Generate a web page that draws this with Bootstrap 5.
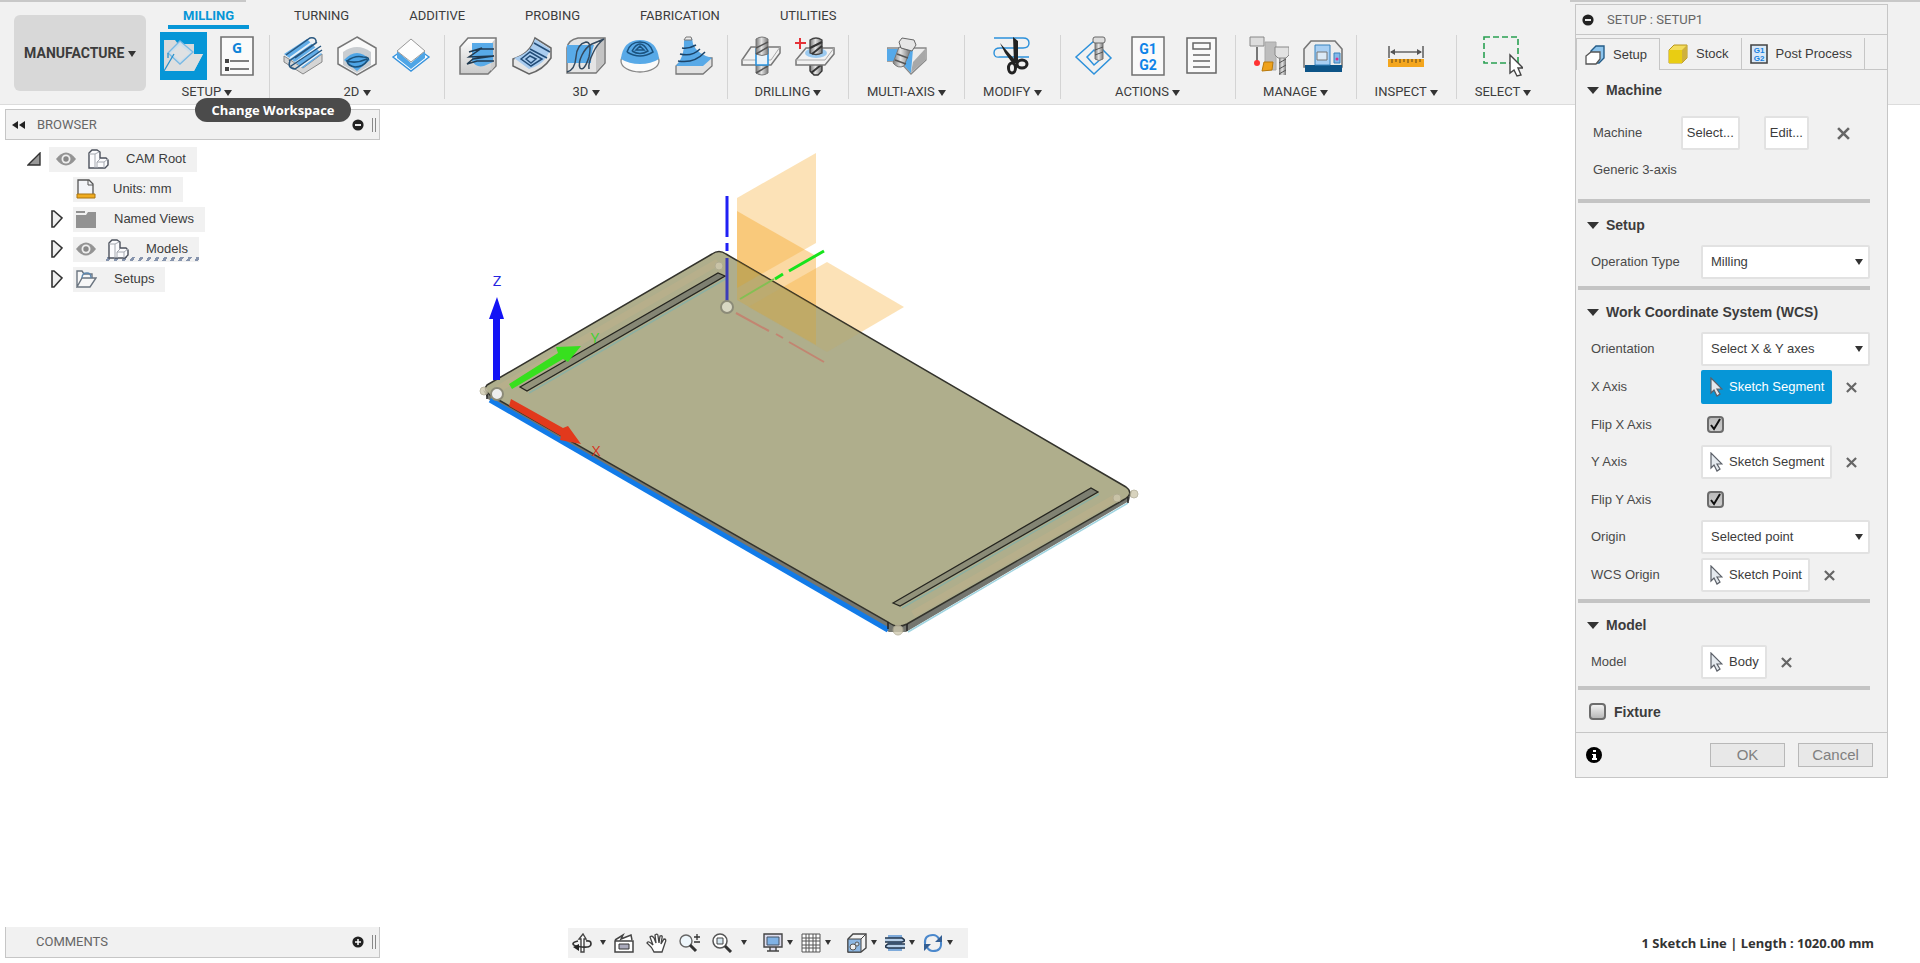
<!DOCTYPE html>
<html lang="en">
<head>
<meta charset="utf-8">
<meta name="viewport" content="width=device-width, initial-scale=1">
<title>Manufacture workspace</title>
<link href="https://cdn.jsdelivr.net/npm/bootstrap@5.3.0/dist/css/bootstrap.min.css" rel="stylesheet">
<style>
:root{--chrome:#f1f1f1;--edge:#c6c6c6;--ink:#3c3c3c;--accent:#0696d7}
body{font:13px/16px "Liberation Sans",Arial,sans-serif;color:var(--ink);background:#fff}
button,select,input{font:inherit;color:inherit}
svg{display:block;flex:none}
.ui-face{font-family:Roboto,"Liberation Sans",sans-serif}
.plain-btn{background:none;border:0;padding:0}
.tri{display:inline-block;width:0;height:0;border:3px solid transparent;border-top:5px solid #333;border-bottom:0;vertical-align:middle}
/* ribbon */
.ribbon{background:var(--chrome);height:105px;border-bottom:1px solid #dcdcdc}
.edge-line{height:2px;background:#c8c8c8;position:absolute;top:0}
.edge-left{left:0;width:246px}.edge-right{right:0;width:350px}
.workspace-btn{width:132px;height:76px;margin:15px 4px 0 14px;background:#d8d8d8;border:0;border-radius:6px;font-weight:700;font-size:14px}
.ribbon-tabs{height:29px;padding-left:18px;gap:30px}
.ribbon-tabs a{height:29px;padding:8px 15px 0;color:var(--ink);text-decoration:none;border-bottom:4px solid transparent}
.ribbon-tabs a.active{color:var(--accent);border-color:var(--accent);font-weight:700}
.tool-group{height:64px;margin-top:6px;border-left:1px solid #d4d4d4;padding:0 13px}
.tool-group:first-child{border:0;padding:0 15px 0 10px}
.tool-icons{height:42px;gap:14px}
.tool-group:first-child .tool-icons{gap:13px}
.tool-label{padding:0 5px;margin-top:7px}
.tool-label .tri,.workspace-btn .tri{border-width:6px 4px 0}
.tool-on{background:var(--accent)}
.hint{left:195px;top:98px;height:24px;width:156px;border-radius:12px;background:#4b4b4b;color:#fff;font:bold 13px/24px "Open Sans","Noto Sans",sans-serif;z-index:5}
/* docks */
.dock-side{padding-left:5px}
.dock{width:375px;height:31px;background:var(--chrome);border:1px solid var(--edge);color:#666;padding:0 3px 0 6px}
.grip{width:4px;height:14px;border:1px solid #888;border-width:0 1px}
.tree{padding:4px 0 0 18px}
.tree li{height:30px}
.tree .node{height:25px;background:var(--chrome);padding:0 11px 0 3px}
.twist{width:22px}
.branch{padding-left:24px}
.node .node-text{padding-left:17px}
.tree .hatch{background:repeating-linear-gradient(120deg,transparent 0 4px,#8694ad 4px 7px) left 30px bottom 1px/100% 4px no-repeat var(--chrome)}
/* setup panel */
.setup-panel{top:4px;right:32px;width:313px;background:var(--chrome);border:1px solid var(--edge);z-index:4}
.panel-title{height:30px;border-bottom:1px solid var(--edge);color:#666;padding-left:6px;gap:13px}
.panel-tabs{padding-top:3px}
.panel-tabs button{height:32px;border:1px solid var(--edge);border-width:0 1px 1px 0;background:none;gap:8px;padding:0 12px 0 8px}
.panel-tabs button.active{border-width:1px 1px 0 1px}
.tabs-rest{border-bottom:1px solid var(--edge)}
.sect{margin:0 17px 0 2px;border-bottom:4px solid #c4c4c4;padding:4px 0 5px 13px}
.sect-head{height:36px;font-weight:700;font-size:14px;gap:7px}
.sect-head .tri{border-width:7px 6px 0;border-top-color:#333;margin-left:-4px}
.line{height:38px}
.line-low{height:37px}
.lbl{width:110px;color:#4a4a4a}
.box{height:34px;background:#fff;border:2px solid #e2e2e2;border-radius:2px;padding:0 6px 0 7px;gap:6px}
.box.hot{background:var(--accent);border-color:var(--accent);color:#fff}
select.box{flex:1;appearance:none;padding:0 8px;background:#fff url("data:image/svg+xml,%3Csvg xmlns='http://www.w3.org/2000/svg' width='8' height='6'%3E%3Cpath fill='%23333' d='M0 0h8L4 6z'/%3E%3C/svg%3E") no-repeat right 5px center}
.x-btn{margin-left:14px}
.tick{appearance:none;width:17px;height:17px;margin:0 0 0 6px;border:2px solid #6c6c6c;border-radius:4px;background:linear-gradient(#f2f2f2,#b9b9b9)}
.tick:checked{background:url("data:image/svg+xml,%3Csvg xmlns='http://www.w3.org/2000/svg' viewBox='0 0 13 13'%3E%3Cpath fill='none' stroke='%23111' stroke-width='2' d='M2 7l3 4L11 1'/%3E%3C/svg%3E") center/13px no-repeat,linear-gradient(#bbb,#ccc)}
.fixture{padding:3px 0 2px 7px}
.fixture label{font-size:14px}
.machine-body{margin:0 17px 0 2px;border-bottom:4px solid #c4c4c4;padding:2px 0 13px 15px}
.machine-body .sect-head{margin-left:-2px}
.machine-line{margin:6px 0 2px}
.foot{border-top:1px solid var(--edge);height:45px;padding:0 14px 0 10px;gap:13px}
.foot button.act{width:75px;height:24px;border:1px solid #b8b8b8;background:#e8e8e8;color:#808080;font-size:15px;padding:0;line-height:20px}
/* bottom */
.bottom-bar{padding-bottom:5px}
.nav-tools{height:30px;background:var(--chrome);margin-left:188px;padding:0 15px 0 4px}
.nav-tools button+button{margin-left:12px}
.status{font:bold 13px/16px "Noto Sans","Open Sans",sans-serif;padding-right:46px;color:#333}
.scene{z-index:-1}
</style>
</head>
<body class="min-vh-100 d-flex flex-column position-relative">
<svg width="0" height="0" class="position-absolute" aria-hidden="true"><defs>
<linearGradient id="met" x1="0" x2="1"><stop offset="0" stop-color="#777"/><stop offset=".45" stop-color="#e4e4e4"/><stop offset="1" stop-color="#777"/></linearGradient>
<linearGradient id="blk" x1="0" x2="0" y1="0" y2="1"><stop offset="0" stop-color="#fff"/><stop offset="1" stop-color="#c9c9c9"/></linearGradient>
<symbol id="eye" viewBox="0 0 20 14"><path d="M0 7Q10-6 20 7Q10 20 0 7" fill="#949494"/><circle cx="10" cy="7" r="4.5" fill="#eee"/><circle cx="10" cy="7" r="2.7" fill="#888"/></symbol>
<symbol id="comp" viewBox="0 0 21 20"><path d="M1 4l3-3h5l3 2v6h6l2 2v5l-3 3H1z" fill="#fbfbfd" stroke="#4c515c" stroke-width="1.4"/><path d="M1 5h6v14M7 5l4-2M9 13h7v6M16 13l4-3M9 19v-6l3-3" fill="none" stroke="#a5a9b1"/></symbol>
<symbol id="minus" viewBox="0 0 12 12"><circle cx="6" cy="6" r="5.6" fill="#222"/><path d="M3 6h6" stroke="#fff" stroke-width="1.8"/></symbol>
<symbol id="plus" viewBox="0 0 12 12"><circle cx="6" cy="6" r="5.6" fill="#222"/><path d="M3 6h6M6 3v6" stroke="#fff" stroke-width="1.5"/></symbol>
<symbol id="ptr" viewBox="0 0 13 20"><path d="M1 1v15l3-3 3 6 3-2-3-5h5z" fill="#e4e9ee" stroke="#5b6068" stroke-width="1.2"/></symbol>
<symbol id="cross" viewBox="0 0 12 12"><path d="M1 1l10 10M11 1L1 11" stroke="#666" stroke-width="2.4"/></symbol>
<symbol id="twisty" viewBox="0 0 12 18"><path d="M1 1h2l8 7-8 9H1z" fill="#f0f0f0" stroke="#333" stroke-width="1.6"/></symbol>
</defs></svg>

<svg class="scene position-absolute start-0 bottom-0 w-100" viewBox="0 104 1920 859" role="img" aria-label="Stock plate with coordinate axes">
<defs><clipPath id="face"><path d="M487 385L712 254Q719 249 726 254L1126 487Q1134 493 1125 499L907 624Q897 629 888 622L490 395Q483 390 487 385Z"/></clipPath>
<linearGradient id="slot"><stop offset="0" stop-color="#95957c"/><stop offset="1" stop-color="#7b7d70"/></linearGradient></defs>
<g fill="#f7ab32" fill-opacity=".35"><path d="M737 198L816 153V243L737 288Z"/><path d="M737 211L816 256V345L737 300Z" fill-opacity=".45"/><path d="M827 262L904 307L827 352L748 307Z"/></g>
<path d="M483 390L488 399L889 632H906L1129 501L1132 491L907 620H888Z" fill="#74766f"/>
<path d="M908 632L1128 503" stroke="#9fd4e0" stroke-width="1.5"/>
<path d="M490 400L888 630" stroke="#127be8" stroke-width="5"/>
<path d="M487 385L712 254Q719 249 726 254L1126 487Q1134 493 1125 499L907 624Q897 629 888 622L490 395Q483 390 487 385Z" fill="#afae8c" stroke="#33332c" stroke-width="1.5"/>
<path d="M498 389L718 262M913 614L1115 498" stroke="#c5b28a" stroke-width="7" opacity=".4"/>
<g clip-path="url(#face)" fill="#f0a000" fill-opacity=".2"><path d="M737 198L816 153V243L737 288Z"/><path d="M737 211L816 256V345L737 300Z"/><path d="M827 262L904 307L827 352L748 307Z" fill-opacity=".08"/></g>
<g stroke="#25251f" stroke-width="1.3" fill="url(#slot)"><path d="M520 387L718 273L725 276L527 391Z"/><path d="M893 603L1091 488L1098 492L900 606Z"/></g>
<path d="M529 393L727 278M902 608L1099 494" stroke="#7fb1ac" stroke-width="1.5" opacity=".7"/>
<path d="M888 622v7M907 624v7M1128 497v6M487 394v5" stroke="#222" stroke-width="1.5"/>
<g stroke-width="3" fill="none"><path d="M727 196v41M727 243v8" stroke="#2020f5"/><path d="M727 258v44" stroke="#3c3cb8"/><path d="M740 299l34-20" stroke="#84bf53" stroke-width="2"/><path d="M775 279l8-5M789 271l35-20" stroke="#18e31c"/><path d="M736 313l33 18M776 334l7 4M789 342l35 20" stroke="#c28571" stroke-width="2"/></g>
<g fill="#d9d8c4" stroke="#8c8b78" stroke-width="2"><circle cx="727" cy="307" r="6"/><circle cx="497" cy="394" r="6" fill="#eee"/></g>
<g fill="#cfc9ae" stroke="#b0ab92" opacity=".8"><circle cx="719" cy="266" r="4"/><circle cx="1117" cy="498" r="4"/><circle cx="484" cy="391" r="4"/><circle cx="1134" cy="494" r="4"/><circle cx="898" cy="630" r="5"/></g>
<path d="M493 380V319h-4l8-22 7 22h-4v61z" fill="#1313f5"/>
<path d="M509 384L558 353L556 347L581 346L568 362L563 359L512 389Z" fill="#37e01e"/>
<path d="M511 399L563 428L568 426L581 444L560 440L561 436L509 406Z" fill="#e2391c"/>
<g font-family="Open Sans,Noto Sans,sans-serif" font-size="15" text-anchor="middle"><text x="497" y="286" fill="#2424e0">Z</text><text x="595" y="343" fill="#3cd22d">Y</text><text x="596" y="456" fill="#d8301c">X</text></g>
</svg>

<header class="ribbon ui-face d-flex align-items-start position-relative">
<div class="edge-line edge-left"></div><div class="edge-line edge-right"></div>
<button class="workspace-btn px-0">MANUFACTURE <span class="tri"></span></button>
<div>
<nav class="ribbon-tabs d-flex" aria-label="Workspaces"><a href="#" class="active">MILLING</a><a href="#">TURNING</a><a href="#">ADDITIVE</a><a href="#">PROBING</a><a href="#">FABRICATION</a><a href="#">UTILITIES</a></nav>
<div class="d-flex">
<section class="tool-group"><div class="tool-icons d-flex align-items-center justify-content-center">
<button class="plain-btn tool-on" aria-label="New setup"><svg width="47" height="48" viewBox="0 0 47 48"><path d="M4 39V8h11l3 4h16v10h9l-9 17z" fill="#d9dadb"/><path d="M4 39L15 22h28L34 39z" fill="#dedfdf"/><path d="M20 9l13 11-13 12L8 21z" fill="#cddeea" stroke="#79b9e4" stroke-width="1.3"/><path d="M20 13l10 8-10 8-9-8z" fill="#dfe1e3"/><path d="M4 39L14 22M8 21v5" fill="none" stroke="#2891cd" stroke-width="1.3"/></svg></button>
<button class="plain-btn" aria-label="NC program"><svg width="34" height="40" viewBox="0 0 34 40"><path d="M1 1h32v38H1z" fill="#fafafa" stroke="#707070" stroke-width="1.6"/><text x="17" y="17" text-anchor="middle" font-family="Open Sans" font-weight="700" font-size="14" fill="#0d83d8">G</text><path d="M5 23h4v4H5zM5 31h4v4H5z" fill="#444"/><path d="M10 25h19M10 33h19" stroke="#555" stroke-width="1.4"/></svg></button>
</div><div class="tool-label text-center">SETUP <span class="tri"></span></div></section>

<section class="tool-group"><div class="tool-icons d-flex align-items-center justify-content-center">
<button class="plain-btn" aria-label="Face"><svg width="40" height="40"><path d="M1 20L20 32 39 18v8L20 38 1 26z" fill="#d5d5d5" stroke="#888"/><path d="M1 18L24 3l15 15-19 14z" fill="#63aee8"/><path d="M7 22L31 5M12 27L36 10M17 31L38 16" stroke="#e8f1f8" stroke-width="2"/><path d="M3 19L27 2q7-1 6 5L12 22M6 25L34 6M8 30L38 10M7 25q-3 7 5 8L39 14" fill="none" stroke="#27567f" stroke-width="1.5"/></svg></button>
<button class="plain-btn" aria-label="2D adaptive"><svg width="40" height="40"><path d="M20 1l19 11v16L20 39 1 28V12z" fill="#fafafa" stroke="#767676" stroke-width="1.5"/><path d="M6 16q14-10 28 0v13L20 37 6 29z" fill="#c9cdd1"/><path d="M7 24q13-14 26 0L20 35z" fill="#4ea5e6"/><path d="M10 25q8-6 16-4 8 0 4 4-4 6-12 6-7-1-8-6q9 3 20-2" fill="none" stroke="#1c527b" stroke-width="1.5"/></svg></button>
<button class="plain-btn" aria-label="2D pocket"><svg width="40" height="40"><path d="M20 8l18 13-18 14L2 21z" fill="#fff" stroke="#3793dd" stroke-width="1.4"/><path d="M6 15v7l14 11 14-11v-7L20 27z" fill="#4ea5e6"/><path d="M20 3l14 12-14 11L6 15z" fill="#fdfdfd" stroke="#999"/></svg></button>
</div><div class="tool-label text-center">2D <span class="tri"></span></div></section>

<section class="tool-group"><div class="tool-icons d-flex align-items-center justify-content-center">
<button class="plain-btn" aria-label="Adaptive clearing"><svg width="40" height="40"><path d="M2 11L10 2h28v28l-8 8H2z" fill="url(#blk)" stroke="#777" stroke-width="1.5"/><path d="M37 3l-4 5v27l4-5z" fill="#ccc"/><path d="M14 7h21v19l-9 4q-8 2-12-5z" fill="#58aae8"/><path d="M36 13H21l-10 3 13-4-13 9 25-1-21 3-6 5 10-3h17" fill="none" stroke="#20394f" stroke-width="1.5"/></svg></button>
<button class="plain-btn" aria-label="Pocket clearing"><svg width="40" height="40"><path d="M1 23Q18 18 23 2l16 10v10Q31 34 17 38L1 30z" fill="#e6e6e6" stroke="#666" stroke-width="1.5"/><path d="M2 22Q18 18 23 3l15 10Q34 28 17 33z" fill="#a9ccef"/><path d="M22 7l16 9M18 13l17 9M9 23l9-7 12 7-11 7zM14 23l4-3 6 3-5 4z" fill="none" stroke="#234d78" stroke-width="1.5"/></svg></button>
<button class="plain-btn" aria-label="Parallel"><svg width="40" height="40"><path d="M1 12Q2 4 12 2h27v25l-9 10H1z" fill="#e4e4e4" stroke="#777" stroke-width="1.5"/><path d="M1 9h27q-3 8-3 18H1z" fill="#58aae8"/><path d="M30 10l8-7v24l-8 9z" fill="#c4c4c4"/><path d="M1 36q8-2 9-15T20 6q6 0 3 15-5 15-9 11-2-5 2-13T26 8l12-5M23 33q-1-6 4-16 4-9 11-14" fill="none" stroke="#34495e" stroke-width="1.5"/></svg></button>
<button class="plain-btn" aria-label="Scallop"><svg width="40" height="40"><ellipse cx="20" cy="25" rx="19" ry="11" fill="#fafafa" stroke="#888" stroke-width="1.3"/><path d="M1 23Q3 4 20 4t19 19q-8 5-19 5T1 23" fill="#58a9e7"/><path d="M7 16Q10 6 20 6t13 10q-13 8-26 0M12 15Q16 8 20 8t8 7q-8 5-16 0M16 14l4-4 4 4z" fill="none" stroke="#1b5380" stroke-width="1.5"/></svg></button>
<button class="plain-btn" aria-label="Contour"><svg width="40" height="40"><path d="M2 30l9-8h27v8l-9 8H2z" fill="#e1e1e1" stroke="#777" stroke-width="1.3"/><path d="M2 30q9-10 8-25l2-3h6l1 6q4 10 19 14l-9 8z" fill="#58a9e7"/><path d="M10 4l2-3h5l1 3z" fill="#ededed" stroke="#777"/><path d="M8 12q7 1 14-3M6 18q12 3 20-5M4 25q16 3 27-9" fill="none" stroke="#1b4469" stroke-width="1.5"/></svg></button>
</div><div class="tool-label text-center">3D <span class="tri"></span></div></section>

<section class="tool-group"><div class="tool-icons d-flex align-items-center justify-content-center">
<button class="plain-btn" aria-label="Drill"><svg width="40" height="40"><path d="M15 28h12v9q-6 4-12 0z" fill="url(#met)" stroke="#777"/><path d="M15 37l12-7" stroke="#555" stroke-width="1.5"/><path d="M1 24L10 11h29v6l-9 12H1z" fill="#f2f2f2" stroke="#777" stroke-width="1.5"/><path d="M1 24h29l9-13" fill="none" stroke="#aaa"/><path d="M15 13h12v16H15z" fill="#e9f2f9" stroke="#2b92dc" stroke-width="1.6"/><path d="M15 3q6-4 12 0v15q-6 3-12 0z" fill="url(#met)" stroke="#777"/><path d="M15 12l12-6M15 18l12-7" stroke="#555" stroke-width="1.5"/></svg></button>
<button class="plain-btn" aria-label="Hole recognition"><svg width="40" height="40"><path d="M15 28h12v7l-4 4h-4l-4-4z" fill="url(#met)" stroke="#333" stroke-width="1.3"/><path d="M16 37l10-8" stroke="#333" stroke-width="2"/><path d="M1 24L11 12h28v6l-9 11H1z" fill="#f2f2f2" stroke="#777" stroke-width="1.5"/><path d="M1 24h29l9-12" fill="none" stroke="#aaa"/><ellipse cx="21" cy="17" rx="11" ry="5" fill="#9bcaf0"/><path d="M15 4q6-4 12 0v13q-6 3-12 0z" fill="url(#met)" stroke="#444" stroke-width="1.3"/><path d="M15 12l12-6M17 18l10-8" stroke="#333" stroke-width="2"/><path d="M0 7h11M5 2v11" stroke="#e53238" stroke-width="2"/></svg></button>
</div><div class="tool-label text-center">DRILLING <span class="tri"></span></div></section>

<section class="tool-group"><div class="tool-icons d-flex align-items-center justify-content-center">
<button class="plain-btn" aria-label="Multi-axis"><svg width="40" height="40"><path d="M0 12h39v12L24 38 12 25H0z" fill="#ececec" stroke="#888" stroke-width="1.3"/><path d="M0 13h26l-2 24L13 25H0z" fill="#55a9e9"/><path d="M26 26l12-13v11L24 37z" fill="#a8a8a8"/><path d="M12 11l11 4-6 15q-6 3-11-3z" fill="url(#met)" stroke="#777"/><path d="M10 18l11 4M8 24l11 4" stroke="#555" stroke-width="1.5"/><path d="M15 2l12 2 2 5-4 6-11-3-2-6z" fill="#e6e6e6" stroke="#666"/></svg></button>
</div><div class="tool-label text-center">MULTI-AXIS <span class="tri"></span></div></section>

<section class="tool-group"><div class="tool-icons d-flex align-items-center justify-content-center">
<button class="plain-btn" aria-label="Trim"><svg width="40" height="40"><path d="M2 2h29q6 0 6 5t-6 5H8q-6 0-6 5t6 4h29" fill="none" stroke="#2d91db" stroke-width="1.4"/><path d="M21 1l5 4v22h-4zM8 7l15 17-2 4L13 17z" fill="#222"/><g fill="none" stroke="#222" stroke-width="3"><ellipse cx="20" cy="32" rx="3.500" ry="5"/><ellipse cx="30" cy="28" rx="5" ry="4"/></g></svg></button>
</div><div class="tool-label text-center">MODIFY <span class="tri"></span></div></section>

<section class="tool-group"><div class="tool-icons d-flex align-items-center justify-content-center">
<button class="plain-btn" aria-label="Simulate"><svg width="40" height="40"><path d="M20 5l17 17-17 16L2 21z" fill="none" stroke="#2d91db" stroke-width="1.5"/><path d="M20 14l8 8-8 7-7-8z" fill="none" stroke="#2d91db" stroke-width="1.5"/><path d="M21 6h8v17q-4 3-8 0z" fill="url(#met)" stroke="#777"/><path d="M21 14l8-3M21 19l8-3" stroke="#555"/><rect x="19" y="1" width="12" height="6" rx="2" fill="#ddd" stroke="#666"/></svg></button>
<button class="plain-btn" aria-label="Post process"><svg width="40" height="40"><path d="M4 1h32v38H4z" fill="#fafafa" stroke="#707070" stroke-width="1.5"/><g font-family="Roboto" font-weight="700" font-size="14" fill="#0d83e8" text-anchor="middle"><text x="20" y="18">G1</text><text x="20" y="34">G2</text></g></svg></button>
<button class="plain-btn" aria-label="Setup sheet"><svg width="40" height="40"><path d="M5 2h29v35H5zM11 7h17v6H11z" fill="#fafafa" stroke="#666" stroke-width="1.5"/><path d="M11 19h17M11 25h17M11 31h17" stroke="#666" stroke-width="1.5"/></svg></button>
</div><div class="tool-label text-center">ACTIONS <span class="tri"></span></div></section>

<section class="tool-group"><div class="tool-icons d-flex align-items-center justify-content-center">
<button class="plain-btn" aria-label="Tool library"><svg width="40" height="40"><path d="M1 1h14v9H1z" fill="#ddd" stroke="#888"/><path d="M8 11v14" stroke="#777" stroke-width="2"/><circle cx="8" cy="27" r="3" fill="#f33"/><path d="M16 6h11v28H16z" fill="#bdbdbd" stroke="#aaa"/><path d="M15 26h9l-1 8-10 1z" fill="#eea21c" stroke="#b9790a"/><path d="M30 21h7v18h-7z" fill="url(#met)"/><path d="M30 27l7-4M30 33l7-4M30 38l7-4" stroke="#555"/><path d="M26 11h14v8l-3 3h-8l-3-3z" fill="#e2e2e2" stroke="#888"/></svg></button>
<button class="plain-btn" aria-label="Machine library"><svg width="40" height="40"><path d="M1 13l7-8h24l7 8v18H1z" fill="#ededed" stroke="#777" stroke-width="1.6"/><path d="M2 29h37v7H2z" fill="#0d5487"/><path d="M12 9h15v20H12z" fill="#a8cff3" stroke="#3782bd"/><path d="M14 16h10v8H14z" fill="#dceaf6" stroke="#777"/><path d="M31 17h6v10h-6z" fill="#85b8e9" stroke="#3782bd"/><circle cx="34" cy="23" r="1.5" fill="#d2328c"/></svg></button>
</div><div class="tool-label text-center">MANAGE <span class="tri"></span></div></section>

<section class="tool-group"><div class="tool-icons d-flex align-items-center justify-content-center">
<button class="plain-btn" aria-label="Measure"><svg width="40" height="40"><path d="M3 10v12M37 10v12M5 16h30" stroke="#666" stroke-width="1.6"/><path d="M4 16l5-3v6zM36 16l-5-3v6z" fill="#555"/><path d="M2 23h36v8H2z" fill="#f4a61d"/><path d="M6 23v4M10 23v3M14 23v4M18 23v3M22 23v4M26 23v3M30 23v4M34 23v3" stroke="#5c441a"/></svg></button>
</div><div class="tool-label text-center">INSPECT <span class="tri"></span></div></section>

<section class="tool-group"><div class="tool-icons d-flex align-items-center justify-content-center">
<button class="plain-btn" aria-label="Select"><svg width="40" height="42"><path d="M1 2h34v26H1z" fill="none" stroke="#28a052" stroke-width="1.6" stroke-dasharray="6 3"/><path d="M27 20v18l4-3 3 6 4-1-3-7h5z" fill="#fff" stroke="#444" stroke-width="1.4"/></svg></button>
</div><div class="tool-label text-center">SELECT <span class="tri"></span></div></section>
</div></div>
<div class="hint position-absolute text-center" role="tooltip">Change Workspace</div>
</header>

<aside class="setup-panel position-absolute">
<div class="panel-title ui-face d-flex align-items-center"><svg width="12" height="12"><use href="#minus"/></svg>SETUP : SETUP1</div>
<div class="panel-tabs d-flex">
<button class="active d-flex align-items-center"><svg width="20" height="20"><path d="M6 6l5-5h8v12l-5 5H6z" fill="#8cc4ed" stroke="#245c88" stroke-width="1.4"/><path d="M1 11l5-4h9v7l-4 5H1z" fill="#fff" stroke="#555" stroke-width="1.3"/></svg>Setup</button>
<button class="d-flex align-items-center"><svg width="20" height="20"><path d="M1 6l5-5h13v13l-5 5H1z" fill="#f4dd5c" stroke="#b8961b"/><path d="M1 6h13v13H1z" fill="#e9cd12"/><path d="M14 6l5-5v13l-5 5z" fill="#cfb13c"/></svg>Stock</button>
<button class="d-flex align-items-center"><svg width="18" height="20"><path d="M1 1h16v18H1z" fill="#d9e8f6" stroke="#444" stroke-width="1.6"/><g font-family="Liberation Sans" font-size="8" font-weight="700" fill="#1580e0" text-anchor="middle"><text x="9" y="9">G1</text><text x="9" y="17">G2</text></g></svg>Post Process</button>
<div class="tabs-rest flex-grow-1"></div></div>

<div class="machine-body">
<div class="sect-head d-flex align-items-center"><span class="tri"></span>Machine</div>
<div class="line machine-line d-flex align-items-center"><span class="lbl w-auto me-auto">Machine</span><button class="box px-1">Select...</button><button class="box px-1 ms-4">Edit...</button><button class="plain-btn ms-4 me-3 px-1" aria-label="Clear machine"><svg width="13" height="13"><use href="#cross"/></svg></button></div>
<div class="py-2 lbl">Generic 3-axis</div>
</div>

<div class="sect"><div class="sect-head d-flex align-items-center"><span class="tri"></span>Setup</div>
<div class="line d-flex align-items-center"><label class="lbl" for="op">Operation Type</label><select id="op" class="box"><option>Milling</option></select></div></div>

<div class="sect"><div class="sect-head d-flex align-items-center"><span class="tri"></span>Work Coordinate System (WCS)</div>
<div class="line d-flex align-items-center"><label class="lbl" for="ori">Orientation</label><select id="ori" class="box"><option>Select X &amp; Y axes</option></select></div>
<div class="line d-flex align-items-center"><span class="lbl">X Axis</span><button class="box hot d-flex align-items-center"><svg width="13" height="20"><use href="#ptr"/></svg>Sketch Segment</button><button class="plain-btn x-btn" aria-label="Clear X axis"><svg width="11" height="11"><use href="#cross"/></svg></button></div>
<div class="line-low d-flex align-items-center"><label class="lbl" for="fx">Flip X Axis</label><input id="fx" class="tick" type="checkbox" checked></div>
<div class="line d-flex align-items-center"><span class="lbl">Y Axis</span><button class="box d-flex align-items-center"><svg width="13" height="20"><use href="#ptr"/></svg>Sketch Segment</button><button class="plain-btn x-btn" aria-label="Clear Y axis"><svg width="11" height="11"><use href="#cross"/></svg></button></div>
<div class="line-low d-flex align-items-center"><label class="lbl" for="fy">Flip Y Axis</label><input id="fy" class="tick" type="checkbox" checked></div>
<div class="line d-flex align-items-center"><label class="lbl" for="org">Origin</label><select id="org" class="box"><option>Selected point</option></select></div>
<div class="line d-flex align-items-center"><span class="lbl">WCS Origin</span><button class="box d-flex align-items-center"><svg width="13" height="20"><use href="#ptr"/></svg>Sketch Point</button><button class="plain-btn x-btn" aria-label="Clear WCS origin"><svg width="11" height="11"><use href="#cross"/></svg></button></div></div>

<div class="sect"><div class="sect-head d-flex align-items-center"><span class="tri"></span>Model</div>
<div class="line d-flex align-items-center"><span class="lbl">Model</span><button class="box d-flex align-items-center"><svg width="13" height="20"><use href="#ptr"/></svg>Body</button><button class="plain-btn x-btn" aria-label="Clear model"><svg width="11" height="11"><use href="#cross"/></svg></button></div></div>

<div class="fixture"><div class="line-low d-flex align-items-center"><input id="fixt" class="tick" type="checkbox"><label class="fw-bold ms-2" for="fixt">Fixture</label></div></div>
<div class="foot d-flex align-items-center"><svg width="16" height="16" class="me-auto"><circle cx="8" cy="8" r="8"/><path d="M7 3h3v2H7zM6 7h4v4h1v2H6v-2h1V8H6z" fill="#fff"/></svg><button class="act">OK</button><button class="act">Cancel</button></div>
</aside>

<main class="flex-grow-1 d-flex flex-column">
<section class="flex-grow-1 pt-1 dock-side">
<div class="dock ui-face d-flex align-items-center"><svg width="13" height="8"><path d="M6 0v8L0 4zM13 0v8L7 4z" fill="#222"/></svg><span class="flex-grow-1 ps-2 ms-1">BROWSER</span><svg width="12" height="12" class="me-2"><use href="#minus"/></svg><span class="grip"></span></div>
<ul class="tree list-unstyled mb-0">
<li class="d-flex align-items-center"><span class="twist ms-1 ps-0"><svg width="14" height="14"><path d="M13 1v12H1z" fill="#999" stroke="#333" stroke-width="1.4"/></svg></span><span class="node d-flex align-items-center"><svg width="20" height="14" class="me-2 ms-1"><use href="#eye"/></svg><svg width="21" height="20" class="ms-1"><use href="#comp"/></svg><span class="node-text">CAM Root</span></span></li>
<li class="d-flex align-items-center branch"><span class="twist ms-1"></span><span class="node d-flex align-items-center"><svg width="20" height="20"><path d="M2 1h11l4 4v11H2z" fill="#f2f4f8" stroke="#555" stroke-width="1.3"/><path d="M12 1v5h5" fill="none" stroke="#555"/><path d="M1 15h18v4H1z" fill="#f0ac20" stroke="#aa7410"/></svg><span class="node-text">Units: mm</span></span></li>
<li class="d-flex align-items-center branch"><span class="twist ms-1"><svg width="12" height="18"><use href="#twisty"/></svg></span><span class="node d-flex align-items-center"><svg width="21" height="18"><path d="M0 1h9v2H0zM0 5h10l2-3h8v16H0z" fill="#929292"/></svg><span class="node-text">Named Views</span></span></li>
<li class="d-flex align-items-center branch"><span class="twist ms-1"><svg width="12" height="18"><use href="#twisty"/></svg></span><span class="node hatch d-flex align-items-center"><svg width="20" height="14" class="me-2"><use href="#eye"/></svg><svg width="21" height="20" class="ms-1"><use href="#comp"/></svg><span class="node-text">Models</span></span></li>
<li class="d-flex align-items-center branch"><span class="twist ms-1"><svg width="12" height="18"><use href="#twisty"/></svg></span><span class="node d-flex align-items-center"><svg width="21" height="18"><path d="M1 17V1h5l2 3h8v4M1 17L6 8h14l-6 9z" fill="#f7f7f7" stroke="#6b7580" stroke-width="1.4"/><path d="M6 8q0-5 5-5 4 0 4 5" fill="none" stroke="#5c86ad" stroke-width="1.3"/></svg><span class="node-text">Setups</span></span></li>
</ul>
</section>
<footer class="bottom-bar dock-side d-flex align-items-center">
<div class="dock ui-face d-flex align-items-center border-top-0"><span class="flex-grow-1 ps-4">COMMENTS</span><svg width="12" height="12" class="me-2"><use href="#plus"/></svg><span class="grip"></span></div>
<div class="nav-tools d-flex align-items-center" role="toolbar" aria-label="View">
<button class="plain-btn d-flex align-items-center" aria-label="Orbit"><svg width="20" height="20"><g fill="none" stroke="#444" stroke-width="1.4"><path d="M9 19V6H7l4-5 3 5h-2v13z" fill="#fff"/><path d="M6 8Q1 9 1 11t9 3 9-3-5-3" stroke="#333" stroke-width="1.7"/></g><path d="M7 11v7l-6-4z" fill="#222"/></svg><span class="tri ms-2"></span></button>
<button class="plain-btn ms-2" aria-label="Look at"><svg width="20" height="20"><path d="M1 8h18v11H1zM1 7l8-5-2 4 10-4 1 5" fill="#fff" stroke="#444" stroke-width="1.5"/><path d="M5 11h10v5H5z" fill="#aab" stroke="#333"/></svg></button>
<button class="plain-btn" aria-label="Pan"><svg width="21" height="20"><path d="M8 19q-2-5-7-9 1-3 6 2L4 4q2-2 4 1l2 5-1-8q3-2 3 1l1 7 1-7q3-1 2 2l-1 6 3-5q3 0 1 4l-3 9z" fill="#fff" stroke="#444" stroke-width="1.3"/></svg></button>
<button class="plain-btn" aria-label="Zoom"><svg width="21" height="20"><circle cx="7" cy="8" r="6" fill="#eef6fb" stroke="#666" stroke-width="1.4"/><path d="M11 12l6 6" stroke="#333" stroke-width="3"/><path d="M15 4h6M18 1v6M15 9h6" stroke="#333" stroke-width="1.3"/></svg></button>
<button class="plain-btn d-flex align-items-center" aria-label="Fit"><svg width="21" height="20"><circle cx="8" cy="8" r="7" fill="#fff" stroke="#555" stroke-width="1.5"/><path d="M5 5h6v6H5z" fill="#d6e6ef" stroke="#444"/><path d="M13 13l6 6" stroke="#333" stroke-width="3"/></svg><span class="tri ms-2"></span></button>
<button class="plain-btn d-flex align-items-center ms-3" aria-label="Display"><svg width="20" height="20"><path d="M1 1h18v13H1zM7 14h6v4H7zM4 18h12" fill="#dde" stroke="#444" stroke-width="1.4"/><path d="M4 4h12v8H4z" fill="#80b2e5" stroke="#456"/></svg><span class="tri ms-1"></span></button>
<button class="plain-btn d-flex align-items-center ms-2" aria-label="Grid"><svg width="20" height="20"><path d="M1 1h18v18H1zM5 1v18M8 1v18M12 1v18M15 1v18M1 5h18M1 8h18M1 12h18M1 15h18" fill="#fff" stroke="#555"/></svg><span class="tri ms-1"></span></button>
<button class="plain-btn d-flex align-items-center ms-3" aria-label="Appearance"><svg width="20" height="20"><path d="M1 6l5-5h13v14l-5 4H1z" fill="#f3f3f3" stroke="#444" stroke-width="1.4"/><path d="M1 6h13v13H1z" fill="#8cb7e3" stroke="#444"/><path d="M14 6l5-5" stroke="#444"/><circle cx="6" cy="14" r="3" fill="#eee" stroke="#555"/><circle cx="10" cy="11" r="2" fill="#cde" stroke="#555"/></svg><span class="tri ms-1"></span></button>
<button class="plain-btn d-flex align-items-center ms-2" aria-label="Sections"><svg width="20" height="20"><path d="M3 2h14v16H3z" fill="#7fabdb"/><path d="M0 5h17q5 3 0 4H0M20 11H3q-5 3 0 4h17" fill="#b7d0ea" stroke="#24374e" stroke-width="1.6"/></svg><span class="tri ms-1"></span></button>
<button class="plain-btn d-flex align-items-center ms-2" aria-label="Refresh"><svg width="20" height="20"><path d="M2 11Q1 2 10 2q4 0 6 4M18 9q1 9-8 9-4 0-6-4" fill="none" stroke="#4b88cc" stroke-width="2"/><path d="M19 2v7h-7zM1 18v-7h7z" fill="#345f94"/></svg><span class="tri ms-1"></span></button>
</div>
<div class="status ms-auto">1 Sketch Line | Length : 1020.00 mm</div>
</footer>
</main>
<script src="https://cdn.jsdelivr.net/npm/bootstrap@5.3.0/dist/js/bootstrap.bundle.min.js"></script>
</body>
</html>
